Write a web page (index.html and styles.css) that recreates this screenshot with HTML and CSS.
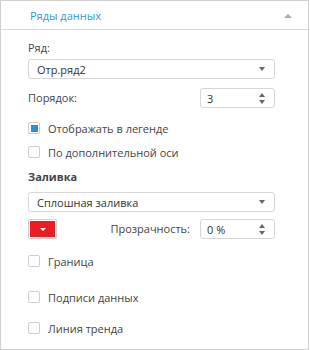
FILE: index.html
```html
<!DOCTYPE html>
<html>
<head>
<meta charset="utf-8">
<link rel="stylesheet" href="styles.css">
</head>
<body>
<div class="panel">
  <div class="header">
    <span class="title">Ряды данных</span>
    <span class="collapse"></span>
  </div>
  <div class="content">
    <div class="label row-ryad">Ряд:</div>
    <div class="select sel-1"><span>Отр.ряд2</span><span class="arrow"></span></div>
    <div class="line row-order">
      <span class="label">Порядок:</span>
      <div class="spin"><span>3</span><span class="spin-arrows"><i class="up"></i><i class="down"></i></span></div>
    </div>
    <label class="check row-c1"><span class="box checked"><i></i></span>Отображать в легенде</label>
    <label class="check row-c2"><span class="box"></span>По дополнительной оси</label>
    <div class="section row-fill">Заливка</div>
    <div class="select sel-2"><span>Сплошная заливка</span><span class="arrow"></span></div>
    <div class="line row-color">
      <div class="color-btn"><span class="swatch"><i class="arrow-white"></i></span></div>
      <div class="opacity">
        <span class="label">Прозрачность:</span>
        <div class="spin"><span>0 %</span><span class="spin-arrows"><i class="up"></i><i class="down"></i></span></div>
      </div>
    </div>
    <label class="check row-c3"><span class="box"></span>Граница</label>
    <label class="check row-c4"><span class="box"></span>Подписи данных</label>
    <label class="check row-c5"><span class="box"></span>Линия тренда</label>
  </div>
</div>
</body>
</html>
```
FILE: styles.css
```css
* { box-sizing: border-box; }
html, body { margin: 0; padding: 0; background: #fff; }
body { font-family: "Open Sans", "Noto Sans", sans-serif; font-size: 11px; color: #444; }
.panel {
  width: 309px; height: 350px;
  border: 1px solid #d0d0d0;
  display: flex; flex-direction: column;
}
.header {
  height: 29px; border-bottom: 1px solid #d8d8d8;
  display: flex; align-items: center; justify-content: space-between;
  padding: 1px 16px 0 29px;
}
.title { color: #2d97dd; font-size: 11px; }
.collapse {
  width: 0; height: 0;
  border-left: 4px solid transparent; border-right: 4px solid transparent;
  border-bottom: 4px solid #a8a8a8;
}
.content { padding: 0 33px 0 27px; display: flex; flex-direction: column; }
.label { line-height: 16px; }
.row-ryad { margin-top: 10px; height: 16px; }
.select {
  height: 20px; border: 1px solid #d6d6d6; border-radius: 3px;
  display: flex; align-items: center; justify-content: space-between;
  padding: 0 9px 0 8px; color: #333;
}
.arrow {
  width: 0; height: 0;
  border-left: 3.5px solid transparent; border-right: 3.5px solid transparent;
  border-top: 4px solid #666;
}
.sel-1 { margin-top: 3px; }
.line { display: flex; align-items: center; justify-content: space-between; height: 20px; }
.row-order { margin-top: 9px; }
.spin {
  width: 75px; height: 20px; border: 1px solid #d6d6d6; border-radius: 3px;
  display: flex; align-items: center; justify-content: space-between;
  padding: 0 9px 0 6px; color: #333;
}
.spin-arrows { display: flex; flex-direction: column; gap: 3px; }
.spin-arrows i { display: block; width: 0; height: 0; border-left: 3.5px solid transparent; border-right: 3.5px solid transparent; }
.spin-arrows .up { border-bottom: 4px solid #666; }
.spin-arrows .down { border-top: 4px solid #666; }
.check { display: flex; align-items: center; height: 16px; gap: 8px; color: #444; }
.box {
  width: 12px; height: 12px; border: 1px solid #cfcfcf; border-radius: 2px;
  display: flex; align-items: center; justify-content: center; flex: none;
}
.box.checked i { display: block; width: 7px; height: 7px; background: #2d8fd5; }
.row-c1 { margin-top: 12px; }
.row-c2 { margin-top: 8px; }
.section { font-weight: bold; color: #444; height: 16px; line-height: 16px; margin-top: 9px; }
.sel-2 { margin-top: 7px; }
.row-color { margin-top: 7px; }
.color-btn {
  width: 29px; height: 20px; border: 1px solid #d0d0d0; border-radius: 2px;
  padding: 1px; display: flex;
}
.swatch { flex: 1; background: #ec1c24; display: flex; align-items: center; justify-content: center; }
.arrow-white {
  display: block; width: 0; height: 0;
  border-left: 3px solid transparent; border-right: 3px solid transparent;
  border-top: 3px solid #fff;
}
.opacity { display: flex; align-items: center; gap: 10px; }
.row-c3 { margin-top: 14px; }
.row-c4 { margin-top: 20px; }
.row-c5 { margin-top: 15px; }
```
